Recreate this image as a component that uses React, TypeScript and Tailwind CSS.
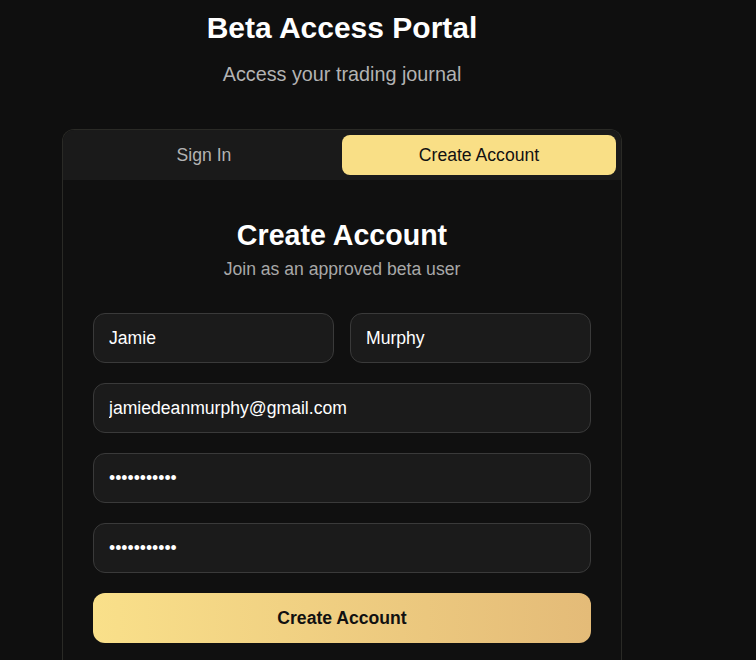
export default function App() {
  const field =
    'h-[50px] w-full rounded-xl border border-[#3a3a3a] bg-[#1b1b1b] px-[15px] text-[17.6px] text-white outline-none';

  return (
    <div className="min-h-screen bg-[#0f0f0f] font-['Liberation_Sans',Arial,sans-serif]">
      <div className="ml-[62px] w-[560px] pt-[10px]">
        {/* Header */}
        <h1 className="text-center text-[30px] font-bold leading-[36px] text-white">Beta Access Portal</h1>
        <p className="mt-[14px] text-center text-[19.8px] leading-[28px] text-[#b3b3b3]">Access your trading journal</p>

        {/* Card */}
        <div className="mt-[41px] overflow-hidden rounded-t-xl border border-b-0 border-[#2a2a26] bg-[#101010]">
          <div className="grid grid-cols-2 gap-px bg-[#1a1a1a] p-[5px] pl-[4px]">
            <button className="h-10 rounded-lg text-[17.6px] text-[#b3b3b3]">Sign In</button>
            <button className="h-10 rounded-lg bg-[#f9df86] text-[17.6px] text-[#111]">Create Account</button>
          </div>

          <div className="px-[30px] pt-[38px] pb-6">
            <h2 className="text-center text-[28.6px] font-bold leading-[34px] text-white">Create Account</h2>
            <p className="mt-[5px] text-center text-[17.6px] leading-6 text-[#a8a8a8]">Join as an approved beta user</p>

            <form className="mt-8 flex flex-col gap-5">
              <div className="grid grid-cols-2 gap-4">
                <input className={field} defaultValue="Jamie" />
                <input className={field} defaultValue="Murphy" />
              </div>
              <input className={field} defaultValue="jamiedeanmurphy@gmail.com" />
              <input className={field} type="password" defaultValue="password123" />
              <input className={field} type="password" defaultValue="password123" />
              <button
                type="button"
                className="h-[50px] w-full rounded-xl bg-gradient-to-r from-[#f9e08a] to-[#e4bb78] text-[17.6px] font-bold text-[#111]"
              >
                Create Account
              </button>
            </form>
          </div>
        </div>
      </div>
    </div>
  );
}
